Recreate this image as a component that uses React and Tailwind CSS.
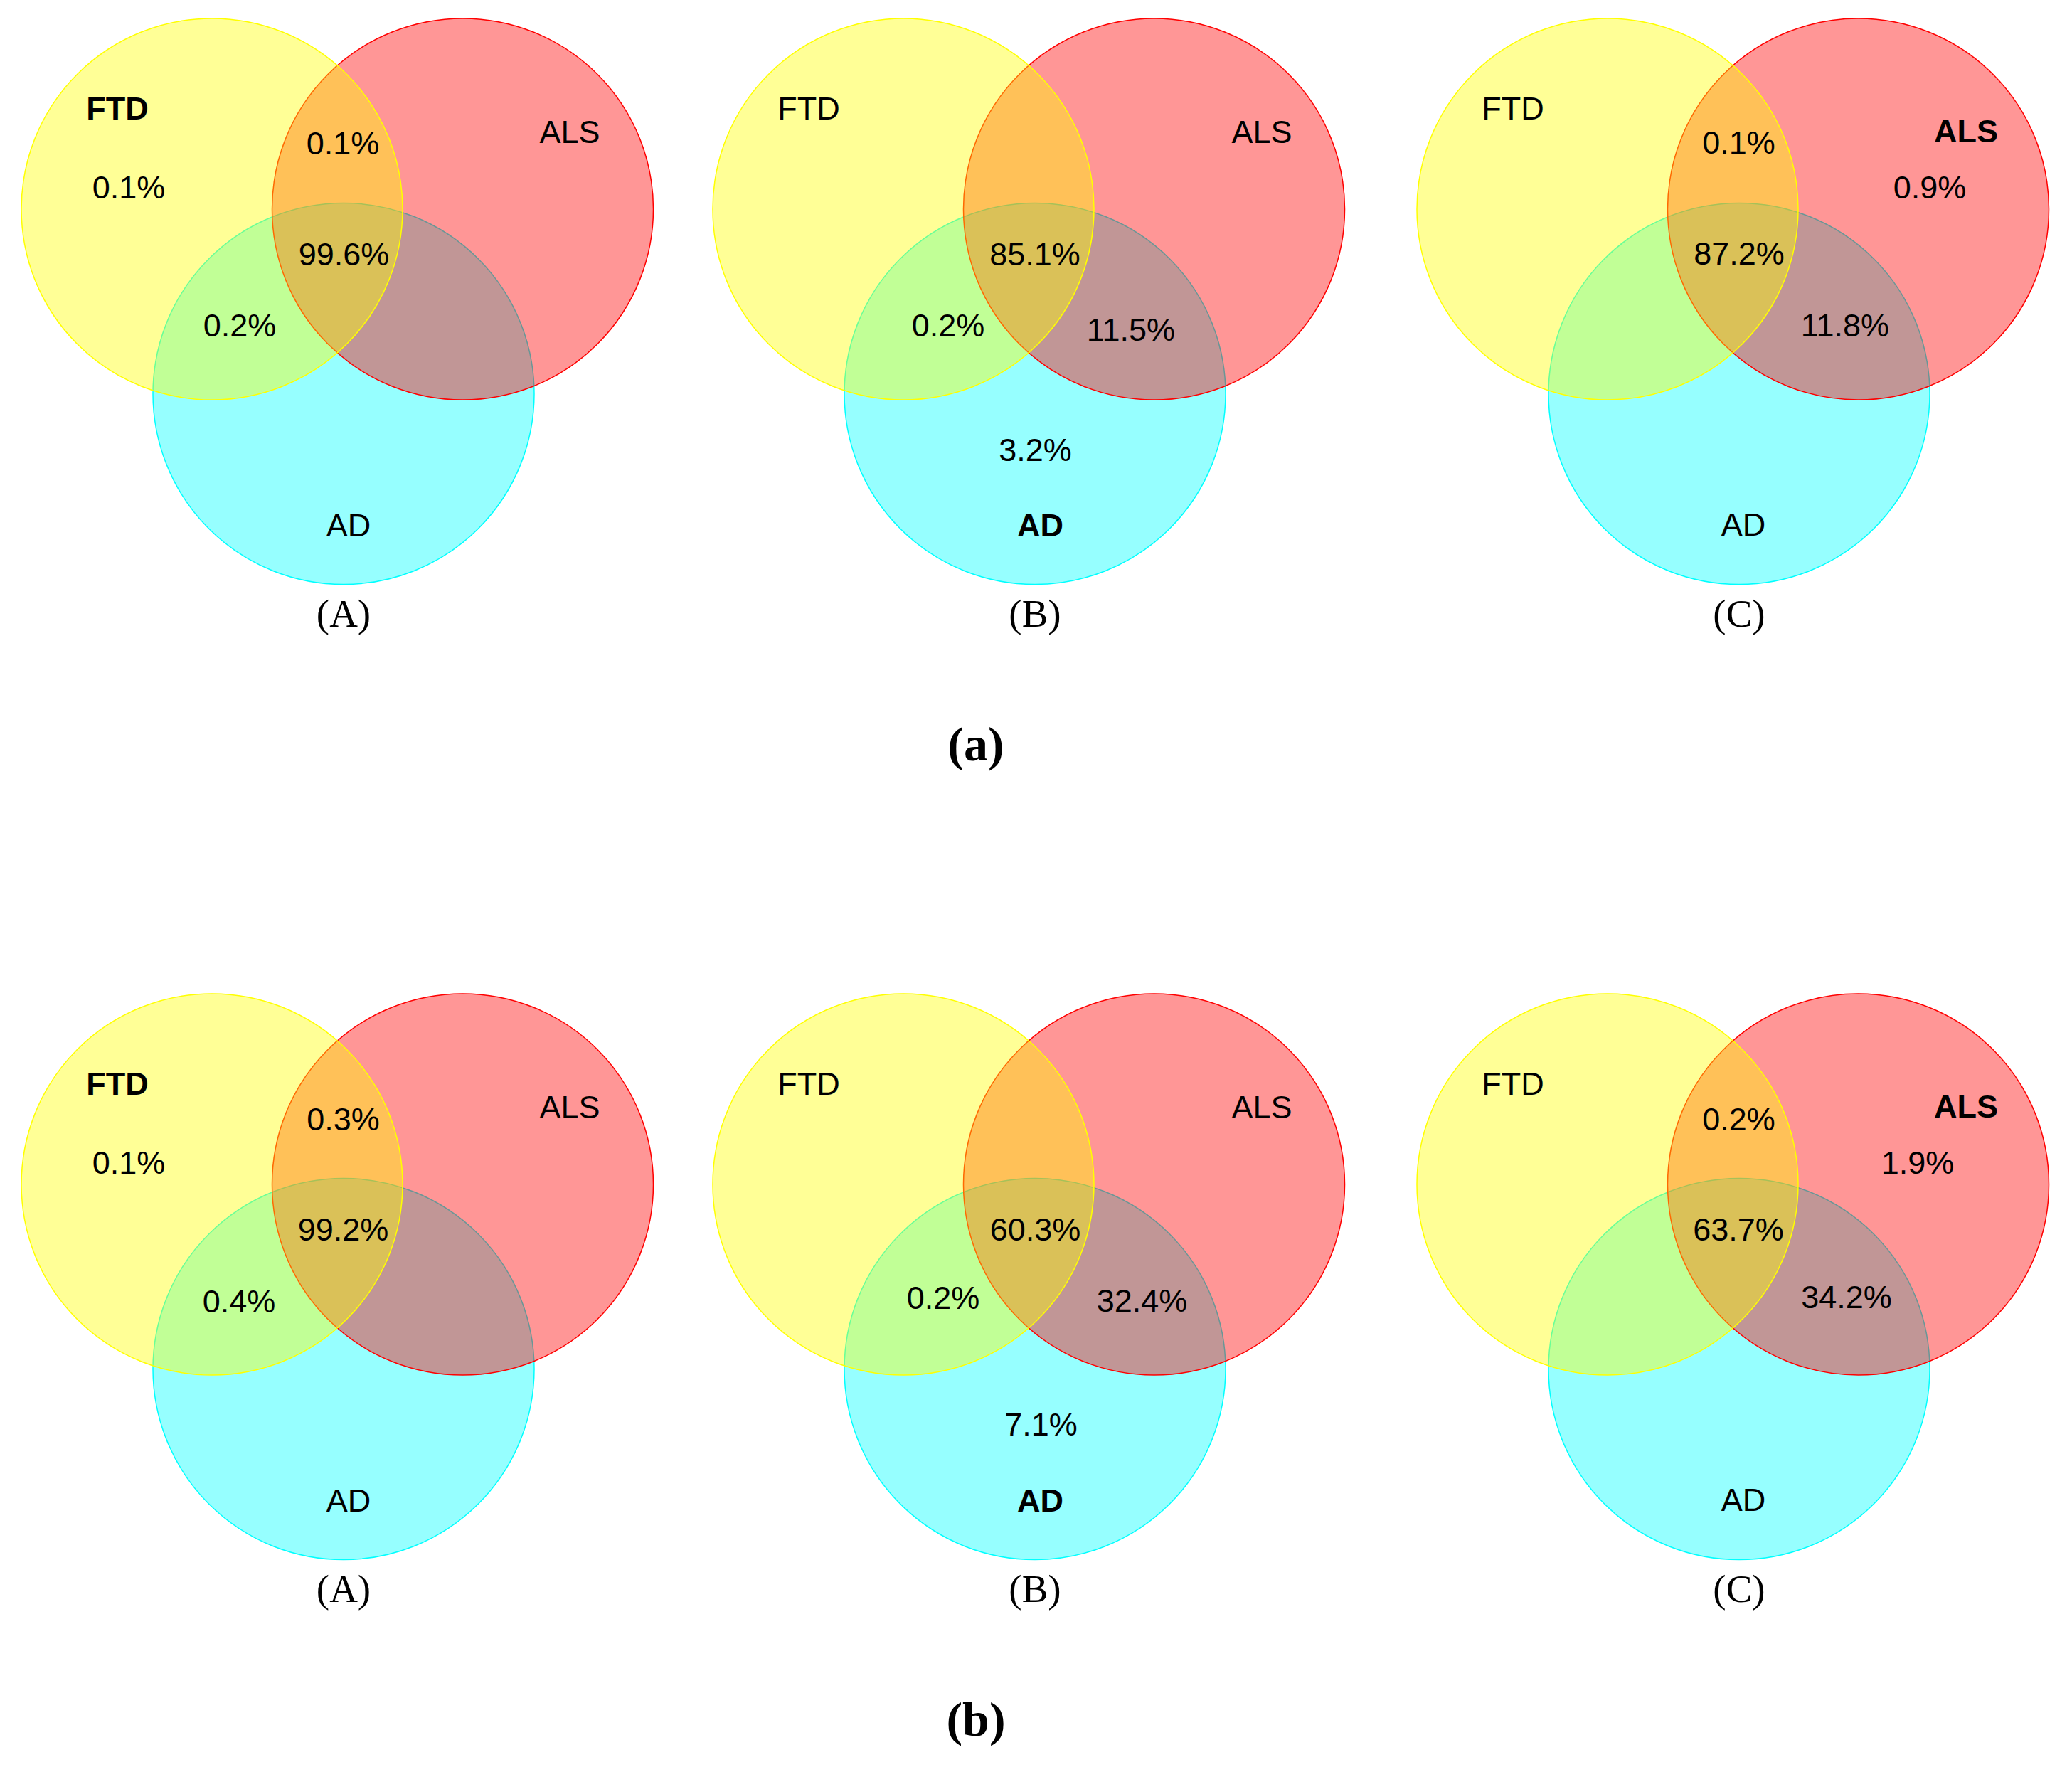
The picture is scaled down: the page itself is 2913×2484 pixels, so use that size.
import React from "react";

// Three-set Venn panels (FTD / ALS / AD). Circles are drawn cyan -> red -> yellow with a
// translucent fill so the overlaps mix the same way as the original matplotlib figure.
const CIRCLES = [
  { key: "ad", cx: 483, cy: 553.5, color: "#00ffff" },
  { key: "als", cx: 650.5, cy: 294, color: "#ff0000" },
  { key: "ftd", cx: 298, cy: 294, color: "#ffff00" },
];
const R = 268;

const TOP_ROW = [
  {
    caption: "(A)",
    labels: [
      { t: "FTD", x: 165, y: 152, bold: true },
      { t: "ALS", x: 801, y: 185 },
      { t: "AD", x: 490, y: 738 },
      { t: "0.1%", x: 181, y: 263 },
      { t: "0.1%", x: 482, y: 201 },
      { t: "99.6%", x: 483.5, y: 357 },
      { t: "0.2%", x: 337, y: 457 },
    ],
  },
  {
    caption: "(B)",
    labels: [
      { t: "FTD", x: 165, y: 152 },
      { t: "ALS", x: 802, y: 185 },
      { t: "AD", x: 490.5, y: 738, bold: true },
      { t: "85.1%", x: 483, y: 357 },
      { t: "0.2%", x: 361, y: 457 },
      { t: "11.5%", x: 618, y: 463 },
      { t: "3.2%", x: 483.5, y: 632 },
    ],
  },
  {
    caption: "(C)",
    labels: [
      { t: "FTD", x: 165, y: 152 },
      { t: "ALS", x: 802, y: 184, bold: true },
      { t: "AD", x: 489, y: 736.5 },
      { t: "0.1%", x: 482.5, y: 199.5 },
      { t: "0.9%", x: 751, y: 262.5 },
      { t: "87.2%", x: 483, y: 356 },
      { t: "11.8%", x: 632, y: 457 },
    ],
  },
];

const BOTTOM_ROW = [
  {
    caption: "(A)",
    labels: [
      { t: "FTD", x: 165, y: 152, bold: true },
      { t: "ALS", x: 801, y: 185 },
      { t: "AD", x: 490, y: 738 },
      { t: "0.1%", x: 181, y: 263 },
      { t: "0.3%", x: 482.5, y: 201.5 },
      { t: "99.2%", x: 482.5, y: 356.5 },
      { t: "0.4%", x: 336, y: 457.5 },
    ],
  },
  {
    caption: "(B)",
    labels: [
      { t: "FTD", x: 165, y: 152 },
      { t: "ALS", x: 802, y: 185 },
      { t: "AD", x: 490.5, y: 738, bold: true },
      { t: "60.3%", x: 483.5, y: 357 },
      { t: "0.2%", x: 354, y: 453 },
      { t: "32.4%", x: 633.5, y: 456.5 },
      { t: "7.1%", x: 491.5, y: 630.5 },
    ],
  },
  {
    caption: "(C)",
    labels: [
      { t: "FTD", x: 165, y: 152 },
      { t: "ALS", x: 802, y: 184, bold: true },
      { t: "AD", x: 489, y: 736.5 },
      { t: "0.2%", x: 482.5, y: 201.5 },
      { t: "1.9%", x: 734, y: 263 },
      { t: "63.7%", x: 482, y: 356.5 },
      { t: "34.2%", x: 634, y: 452 },
    ],
  },
];

function VennPanel({ panel }) {
  return (
    <div className="flex flex-col">
      <svg width="940" height="835" viewBox="0 0 940 835" className="block">
        {CIRCLES.map((c) => (
          <circle
            key={c.key}
            cx={c.cx}
            cy={c.cy}
            r={R}
            fill={c.color}
            fillOpacity="0.41"
            stroke={c.color}
            strokeWidth="1.5"
          />
        ))}
        <g className="font-['Liberation_Sans',Arial,sans-serif] text-[45px]" textAnchor="middle" fill="#000">
          {panel.labels.map((l, i) => (
            // baseline sits half a cap height below the measured visual centre
            <text key={i} x={l.x} y={l.y + 16} className={l.bold ? "font-bold" : "font-normal"}>
              {l.t}
            </text>
          ))}
        </g>
      </svg>
      <div className="w-[940px] pl-[26px] text-center font-['Liberation_Serif',serif] text-[55px] leading-[56px] text-black">
        {panel.caption}
      </div>
    </div>
  );
}

function FigureRow({ panels, label }) {
  return (
    <div className="flex flex-col">
      <div className="grid grid-cols-[972px_990px_951px]">
        {panels.map((p, i) => (
          <VennPanel key={i} panel={p} />
        ))}
      </div>
      <div className="mt-[115px] w-[2744px] text-center font-['Liberation_Serif',serif] text-[68px] font-bold leading-[80px] text-black">
        {label}
      </div>
    </div>
  );
}

export default function App() {
  return (
    <div className="min-h-screen w-[2913px] overflow-hidden bg-white">
      <FigureRow panels={TOP_ROW} label="(a)" />
      <div className="mt-[285px]">
        <FigureRow panels={BOTTOM_ROW} label="(b)" />
      </div>
    </div>
  );
}
